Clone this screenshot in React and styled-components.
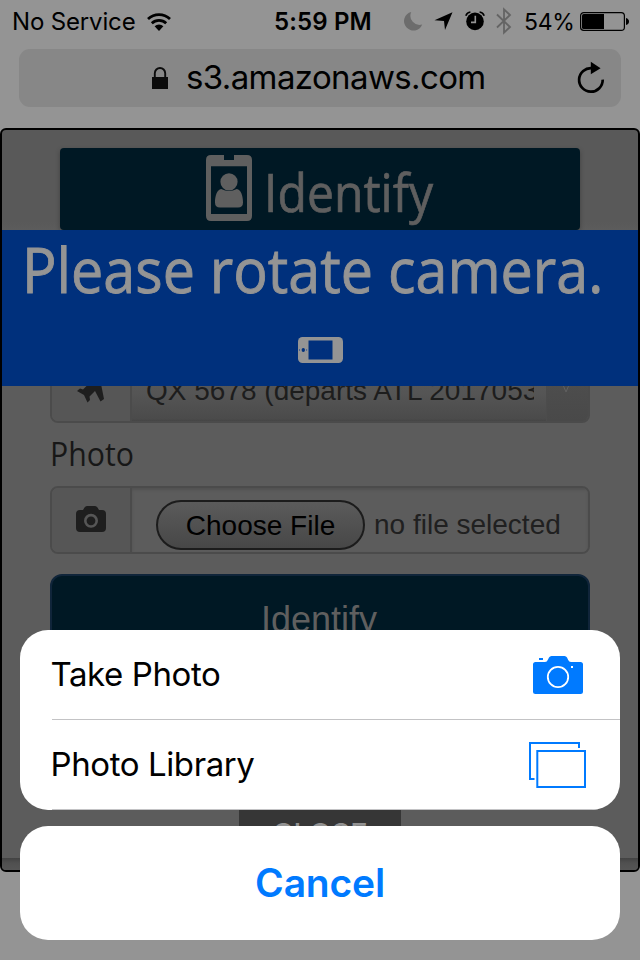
import React from "react";
import styled, { createGlobalStyle } from "styled-components";

const GlobalStyle = createGlobalStyle`
  *, *::before, *::after { box-sizing: border-box; }
  body { margin: 0; background: #949494; }
  svg { display: block; flex: none; }
`;

const ui = `Inter, "Liberation Sans", sans-serif`;
const form = `"Liberation Sans", Arial, sans-serif`;
const brand = `"Open Sans", "Noto Sans", sans-serif`;

const Screen = styled.div`
  position: relative;
  width: 640px;
  height: 960px;
  overflow: hidden;
  background: #949494;
  color: #000;
  font-family: ${ui};
`;

const StatusBar = styled.header`
  display: grid;
  grid-template-columns: 274px 128px 1fr;
  align-items: center;
  height: 49px;
  padding: 0 11px 9px 11px;
  font-size: 24px;
  line-height: 40px;
  white-space: nowrap;
`;

const Carrier = styled.div`
  display: flex;
  align-items: center;
  gap: 10px;
  padding: 2px 0 0 1px;
  letter-spacing: -0.15px;
`;

const Clock = styled.div`
  padding-top: 2px;
  margin-left: -11px;
  font-weight: 600;
  letter-spacing: 0.15px;
`;

const StatusIcons = styled.div`
  display: flex;
  align-items: center;
  margin-left: -9px;
`;

const Percent = styled.span`
  width: 55px;
  padding-top: 2px;
  margin-left: 12px;
  font-size: 23px;
  letter-spacing: -0.3px;
`;

const AddressBar = styled.div`
  display: flex;
  align-items: center;
  height: 58px;
  margin: 0 19px;
  padding: 0 15px 0 132px;
  border-radius: 11px;
  background: #878787;
`;

const Host = styled.span`
  flex: 1;
  margin: 0 0 2px 17px;
  font-size: 33px;
  line-height: 44px;
  letter-spacing: -0.62px;
`;

const Page = styled.main`
  position: relative;
  height: 744px;
  margin-top: 21px;
  padding: 18px 48px 0;
  overflow: hidden;
  border: 2px solid #000;
  border-radius: 6px;
  background: linear-gradient(#595959 0 92px, #5c5c5c 100px);
`;

const TitleBar = styled.div`
  display: flex;
  align-items: flex-start;
  height: 82px;
  margin: 0 10px;
  padding: 7px 0 0 146px;
  border-radius: 4px;
  background: #001824;
  box-shadow: 0 2px 5px rgba(0, 0, 0, 0.28);
  color: #5f5f5f;
`;

const Title = styled.h1`
  width: 180px;
  margin: 0 0 0 12px;
  font: 400 53px/73px ${brand};
  -webkit-text-stroke: 0.7px currentColor;
  transform: scaleX(0.908);
  transform-origin: left;
`;

const InputGroup = styled.div`
  display: flex;
  height: ${(p) => p.$height}px;
  margin-top: ${(p) => p.$top}px;
  overflow: hidden;
  border: 2px solid #4b4b4b;
  border-radius: 8px;
`;

const Addon = styled.div`
  display: flex;
  align-items: center;
  justify-content: center;
  width: 80px;
  padding-bottom: ${(p) => p.$lift}px;
  border-right: 2px solid #4b4b4b;
  background: #565656;
  color: #1e1e1e;
`;

const Select = styled.div`
  display: flex;
  flex: 1;
  min-width: 0;
  background: linear-gradient(#5c5c5c, #555 55%, #4b4b4b 96%, #454545);
  color: #1d1d1d;
`;

const SelectValue = styled.span`
  width: 388px;
  margin-left: 14px;
  overflow: hidden;
  font: 28px/65px ${form};
  white-space: nowrap;
`;

const SelectArrow = styled.span`
  display: flex;
  flex: 1;
  align-items: center;
  justify-content: center;
  margin-left: 12px;
  padding: 0 3px 5px 0;
  border-left: 1px solid #4c4c4c;
  background: linear-gradient(#505050, #494949);
`;

const Label = styled.label`
  display: block;
  height: 40px;
  margin-top: 10px;
  color: #171717;
  font: 32px/41px ${brand};
  transform: scaleX(0.945);
  transform-origin: left;
`;

const FileField = styled.div`
  display: flex;
  flex: 1;
  align-items: flex-start;
  padding: 12px 0 0 24px;
  background: #5c5c5c;
  box-shadow: inset 0 2px 3px rgba(0, 0, 0, 0.12);
  font: 28px/48px ${form};
`;

const ChooseButton = styled.button`
  width: 209px;
  height: 50px;
  padding: 2px 0 0;
  border: 2px solid #1c1c1c;
  border-radius: 25px;
  background: linear-gradient(#5b5b5b, #474747);
  color: #000;
  font: 28px/44px ${form};
`;

const FileName = styled.span`
  margin: 1px 0 0 9px;
  color: #202020;
`;

const Submit = styled.button`
  display: block;
  width: 100%;
  height: 91px;
  margin-top: 20px;
  padding: 0 2px 0 0;
  border: 2px solid #10253a;
  border-radius: 12px;
  background: #001824;
  color: #5f5f5f;
  font: 36px/87px ${form};
`;

const CloseButton = styled.button`
  display: block;
  width: 162px;
  height: 70px;
  margin: 135px auto 0;
  padding: 0 0 2px;
  border: 0;
  background: #363636;
  color: #929292;
  font: 500 29px/66px ${ui};
`;

const PageShade = styled.div`
  position: absolute;
  inset: auto 0 0 0;
  height: 12px;
  background: linear-gradient(#424242, #505050 5px, #555);
`;

const Banner = styled.div`
  position: absolute;
  top: 100px;
  left: 0;
  width: 636px;
  height: 156px;
  padding-left: 20px;
  background: #00307c;
  color: #949494;
`;

const BannerText = styled.p`
  width: 640px;
  margin: 0;
  font: 400 63px/78px ${brand};
  -webkit-text-stroke: 0.9px currentColor;
  white-space: nowrap;
  transform: scaleX(0.912);
  transform-origin: left;
`;

const BannerIcon = styled.div`
  padding: 29px 0 0 276px;
`;

const ActionSheet = styled.div`
  position: absolute;
  inset: auto 20px 20px;
  display: flex;
  flex-direction: column;
  gap: 16px;
`;

const ActionGroup = styled.div`
  height: 180px;
  overflow: hidden;
  border-radius: 28px;
  background: #fff;
`;

const Action = styled.div`
  display: flex;
  align-items: center;
  justify-content: space-between;
  height: 90px;
  margin-left: 32px;
  padding-right: ${(p) => p.$inset}px;
  border-bottom: 1px solid #c3c3c5;
`;

const ActionName = styled.span`
  margin: 0 0 2px -1.5px;
  color: #000;
  font-size: 33px;
  line-height: 44px;
  letter-spacing: -0.4px;
`;

const Cancel = styled.button`
  height: 114px;
  padding: 0;
  border: 0;
  border-radius: 28px;
  background: #fff;
  color: #007aff;
  font: 600 39px/114px ${ui};
  letter-spacing: -0.2px;
`;

const WifiIcon = () => (
  <svg width="26" height="20" viewBox="0 0 26 20" fill="none" stroke="#000">
    <path d="M2 7.1A16 16 0 0 1 24 7.1" strokeWidth="2.8" />
    <path d="M5.8 11.2A10.4 10.4 0 0 1 20.2 11.2" strokeWidth="2.7" />
    <path d="M8.6 14.3A6.3 6.3 0 0 1 17.4 14.3L13 19Z" fill="#000" stroke="none" />
  </svg>
);

const MoonIcon = () => (
  <svg width="19" height="20" viewBox="0 0 19 20">
    <path d="M7.2 1A9.4 9.4 0 1 0 18.2 13.5A9.2 9.2 0 0 1 7.2 1Z" fill="#6c6c6c" />
  </svg>
);

const LocationIcon = () => (
  <svg width="20" height="20" viewBox="0 0 20 20">
    <path d="M18.5 1.3L11 19L10 10L.5 9.3Z" fill="#000" />
  </svg>
);

const AlarmIcon = () => (
  <svg width="20" height="20" viewBox="0 0 20 20">
    <circle cx="10" cy="10.4" r="8.8" fill="#000" />
    <path d="M.8 4.7A6 6 0 0 1 5.4 1M14.6 1A6 6 0 0 1 19.2 4.7" fill="none" stroke="#000" strokeWidth="1.6" />
    <path d="M10.3 4.8V11.4H6" fill="none" stroke="#949494" strokeWidth="1.6" />
  </svg>
);

const BluetoothIcon = () => (
  <svg width="16" height="28" viewBox="0 0 16 28">
    <path d="M1 7.5L14 20L8 25.7V2.3L14 8L1 20.5" fill="none" stroke="#646464" strokeWidth="1.8" />
  </svg>
);

const BatteryIcon = () => (
  <svg width="49" height="20" viewBox="0 0 49 20">
    <rect x=".6" y="1.6" width="43.8" height="17.8" rx="3.2" fill="none" stroke="#000" strokeWidth="1.2" />
    <path d="M2 4.5Q2 3 3.7 3H24V18H3.7Q2 18 2 16.5Z" />
    <path d="M46 7Q49 8 49 10.5T46 14Z" />
  </svg>
);

const LockIcon = () => (
  <svg width="18" height="24" viewBox="0 0 18 24">
    <path d="M3.8 12V7.2a5.2 5.2 0 0 1 10.4 0V12" fill="none" stroke="#0c0c0c" strokeWidth="1.9" />
    <path d="M1 11H17V23H1Z" fill="#0c0c0c" />
  </svg>
);

const ReloadIcon = () => (
  <svg width="30" height="34" viewBox="0 0 30 34">
    <path d="M26.7 18.6A11.8 11.8 0 1 1 16 7.1" fill="none" stroke="#000" strokeWidth="2.7" />
    <path d="M14.8 .8L24.6 7.3L14.8 13.3Z" />
  </svg>
);

const BadgeIcon = () => (
  <svg width="46" height="66" viewBox="0 0 46 66">
    <path
      d="M5 0H18V5H28V0H41Q46 0 46 5V61Q46 66 41 66H5Q0 66 0 61V5Q0 0 5 0ZM5 11.3V59H41V11.3Z"
      fill="#5f5f5f"
      fillRule="evenodd"
    />
    <path
      d="M15.2 34C11 34.5 9 41 9 47.5Q9 52.5 14 52.5H32Q37 52.5 37 47.5C37 41 35 34.5 30.8 34Q23 38 15.2 34Z"
      fill="#5f5f5f"
    />
    <circle cx="23" cy="26.8" r="8.6" fill="#5f5f5f" />
  </svg>
);

const PhoneIcon = () => (
  <svg width="46" height="27" viewBox="0 0 46 27">
    <rect x="0" y="0" width="45" height="26" rx="4.5" fill="#949494" />
    <rect x="10.5" y="3.5" width="24" height="19" fill="#00307c" />
    <ellipse cx="5.3" cy="13" rx="1.7" ry="2.1" fill="#00307c" />
    <path d="M1.5 12V14M8.6 12V14" stroke="#4a6697" />
  </svg>
);

const PlaneIcon = () => (
  <svg width="28" height="32" viewBox="0 0 28 32">
    <path
      d="M27 1C25 0 22 1 20 3L16 7L3 4L0 7L11.5 13L6 18.5L3 17.5L0 20L7 24L10.5 31.5L13 29L12.5 25.5L18 20L23.5 30.5L27 28L24 13L26 9C28 6 28 3 27 1Z"
      fill="currentColor"
    />
  </svg>
);

const SmallCameraIcon = () => (
  <svg width="30" height="26" viewBox="0 0 30 26">
    <path
      d="M4 4H7L8.5 1.5Q9.4 0 11 0H19Q20.6 0 21.5 1.5L23 4H26Q30 4 30 8V22Q30 26 26 26H4Q0 26 0 22V8Q0 4 4 4Z"
      fill="currentColor"
    />
    <circle cx="15" cy="14.8" r="5.7" fill="none" stroke="#565656" strokeWidth="2.6" />
  </svg>
);

const CameraIcon = () => (
  <svg width="50" height="38" viewBox="0 0 50 38">
    <path
      d="M2.5 6H12Q14 6 15 3.5L16 1.5Q16.8 0 18.5 0H31.5Q33.2 0 34 1.5L35.2 4Q36 6 38 6H47.5Q50 6 50 8.5V35.5Q50 38 47.5 38H2.5Q0 38 0 35.5V8.5Q0 6 2.5 6Z"
      fill="#007aff"
    />
    <rect x="6" y="2" width="4" height="2" fill="#007aff" />
    <circle cx="25" cy="21" r="10.2" fill="none" stroke="#fff" strokeWidth="1.8" />
    <rect x="38" y="10" width="2" height="2" fill="#fff" />
  </svg>
);

const LibraryIcon = () => (
  <svg width="57" height="46" viewBox="0 0 57 46" fill="none" stroke="#007aff" strokeWidth="2">
    <path d="M50 6V1H1V37H5.5" />
    <rect x="8.3" y="9" width="47.7" height="36" />
  </svg>
);

const ChevronIcon = () => (
  <svg width="12" height="14" viewBox="0 0 12 14">
    <path d="M1 0L6 12L11 0Z" fill="#4a4a4a" stroke="#626262" />
  </svg>
);

const IconSlot = styled.span`
  display: flex;
  margin-left: ${(p) => p.$left || 0}px;
`;

export default function App() {
  return (
    <Screen>
      <GlobalStyle />
      <StatusBar>
        <Carrier>
          No Service
          <WifiIcon />
        </Carrier>
        <Clock>5:59 PM</Clock>
        <StatusIcons>
          <IconSlot><MoonIcon /></IconSlot>
          <IconSlot $left={11}><LocationIcon /></IconSlot>
          <IconSlot $left={11}><AlarmIcon /></IconSlot>
          <IconSlot $left={11}><BluetoothIcon /></IconSlot>
          <Percent>54%</Percent>
          <IconSlot $left={1}><BatteryIcon /></IconSlot>
        </StatusIcons>
      </StatusBar>
      <AddressBar>
        <LockIcon />
        <Host>s3.amazonaws.com</Host>
        <ReloadIcon />
      </AddressBar>
      <Page>
        <TitleBar>
          <BadgeIcon />
          <Title>Identify</Title>
        </TitleBar>
        <InputGroup $height={67} $top={126}>
          <Addon $lift={6}>
            <PlaneIcon />
          </Addon>
          <Select>
            <SelectValue>QX 5678 (departs ATL 20170531)</SelectValue>
            <SelectArrow>
              <ChevronIcon />
            </SelectArrow>
          </Select>
        </InputGroup>
        <Label>Photo</Label>
        <InputGroup $height={68} $top={13}>
          <Addon $lift={2}>
            <SmallCameraIcon />
          </Addon>
          <FileField>
            <ChooseButton>Choose File</ChooseButton>
            <FileName>no file selected</FileName>
          </FileField>
        </InputGroup>
        <Submit>Identify</Submit>
        <CloseButton>CLOSE</CloseButton>
        <PageShade />
        <Banner>
          <BannerText>Please rotate camera.</BannerText>
          <BannerIcon>
            <PhoneIcon />
          </BannerIcon>
        </Banner>
      </Page>
      <ActionSheet>
        <ActionGroup>
          <Action $inset={37}>
            <ActionName>Take Photo</ActionName>
            <CameraIcon />
          </Action>
          <Action $inset={34}>
            <ActionName>Photo Library</ActionName>
            <LibraryIcon />
          </Action>
        </ActionGroup>
        <Cancel>Cancel</Cancel>
      </ActionSheet>
    </Screen>
  );
}
